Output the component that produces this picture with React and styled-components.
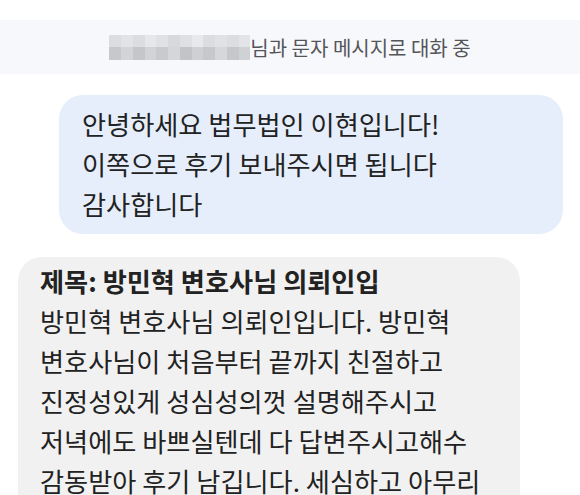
import React from 'react'
import styled, { createGlobalStyle } from 'styled-components'

const GlobalStyle = createGlobalStyle`
  body {
    margin: 0;
    background: #ffffff;
    font-family: "Noto Sans CJK KR", "Noto Sans", sans-serif;
  }
`

const Page = styled.div`
  width: 580px;
  height: 495px;
  overflow: hidden;
  display: flex;
  flex-direction: column;
`

const Notice = styled.div`
  flex-shrink: 0;
  margin-top: 20px;
  height: 54px;
  background: #f7f8fc;
  display: flex;
  align-items: center;
  justify-content: center;
`

const Blur = styled.div`
  display: grid;
  grid-template-columns: repeat(12, 11.75px);
  grid-template-rows: 12.5px 12.5px;
`

const Cell = styled.div`
  background: ${p => p.shade};
`

const NoticeText = styled.span`
  font-size: 20px;
  line-height: 25px;
  color: #555558;
`

const Thread = styled.div`
  display: flex;
  flex-direction: column;
  gap: 23px;
  padding: 21px 17px 0 18px;
`

const Bubble = styled.div`
  flex-shrink: 0;
  align-self: ${p => (p.mine ? 'flex-end' : 'flex-start')};
  width: ${p => (p.mine ? '504px' : '502px')};
  box-sizing: border-box;
  padding: ${p => (p.mine ? '9px 20px 10px 23px' : '4px 20px 30px 22px')};
  border-radius: 24px;
  background: ${p => (p.mine ? '#e6eefb' : '#f1f1f1')};
  color: #222222;
  font-size: 26.2px;
  line-height: 40px;
`

const Line = styled.div`
  font-weight: ${p => (p.bold ? 700 : 400)};
  white-space: nowrap;
`

const topRow = ['#dcdde0', '#e2e3e6', '#dcdde0', '#e6e7ea', '#e0e1e4', '#d8d9dc', '#dfe0e3', '#e8e9ec', '#dcdde0', '#e1e2e5', '#dcdde0', '#e3e4e7']
const bottomRow = ['#c7c8cb', '#d3d4d7', '#c5c6c9', '#d2d3d6', '#c9cacd', '#d5d6d9', '#c3c4c7', '#cfd0d3', '#c7c8cb', '#d6d7da', '#c6c7ca', '#d0d1d4']

const mine = [
  '안녕하세요 법무법인 이현입니다!',
  '이쪽으로 후기 보내주시면 됩니다',
  '감사합니다',
]

const theirs = [
  '방민혁 변호사님 의뢰인입니다. 방민혁',
  '변호사님이 처음부터 끝까지 친절하고',
  '진정성있게 성심성의껏 설명해주시고',
  '저녁에도 바쁘실텐데 다 답변주시고해수',
  '감동받아 후기 남깁니다. 세심하고 아무리',
]

function App() {
  return (
    <Page>
      <GlobalStyle />
      <Notice>
        <Blur>
          {topRow.concat(bottomRow).map((c, i) => (
            <Cell key={i} shade={c} />
          ))}
        </Blur>
        <NoticeText>님과 문자 메시지로 대화 중</NoticeText>
      </Notice>
      <Thread>
        <Bubble mine>
          {mine.map(t => (
            <Line key={t}>{t}</Line>
          ))}
        </Bubble>
        <Bubble>
          <Line bold>제목: 방민혁 변호사님 의뢰인입</Line>
          {theirs.map(t => (
            <Line key={t}>{t}</Line>
          ))}
        </Bubble>
      </Thread>
    </Page>
  )
}

export default App
